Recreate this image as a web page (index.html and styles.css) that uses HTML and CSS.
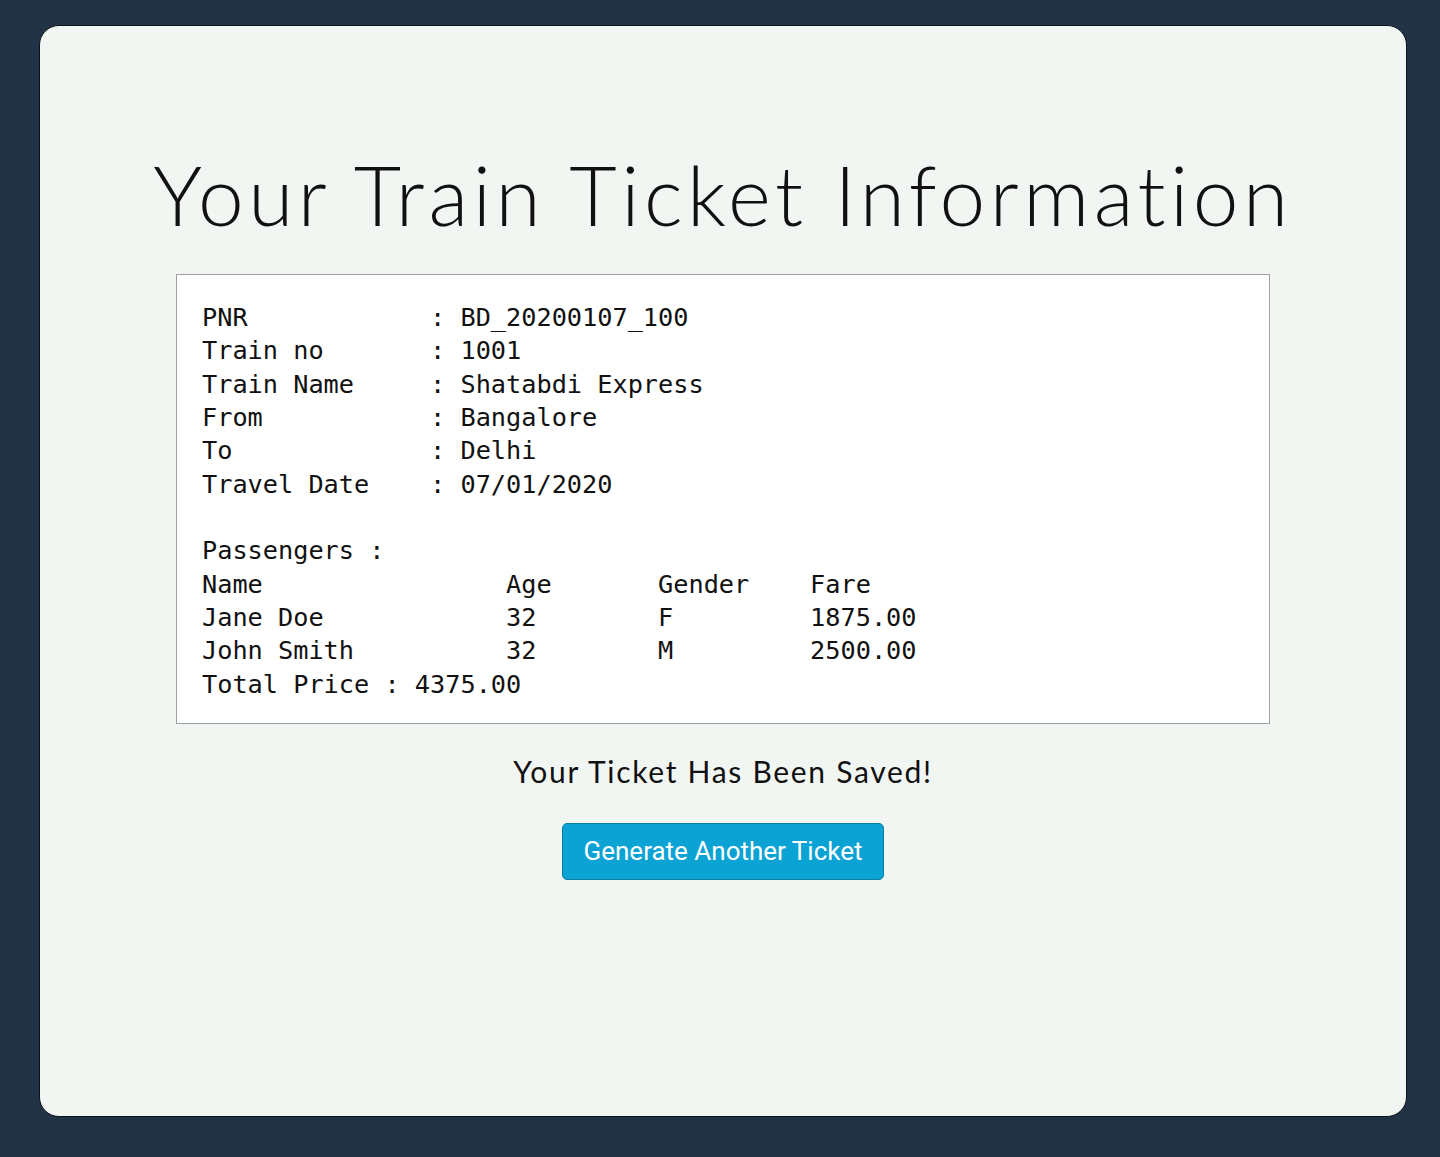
FILE: index.html
```html
<!DOCTYPE html>
<html lang="en">
<head>
<meta charset="utf-8">
<title>Your Train Ticket Information</title>
<link rel="stylesheet" href="styles.css">
</head>
<body>
<main class="card">
  <h1 class="title">Your Train Ticket Information</h1>
  <pre class="ticket">PNR            : BD_20200107_100
Train no       : 1001
Train Name     : Shatabdi Express
From           : Bangalore
To             : Delhi
Travel Date    : 07/01/2020

Passengers :
Name                Age       Gender    Fare
Jane Doe            32        F         1875.00
John Smith          32        M         2500.00
Total Price : 4375.00</pre>
  <p class="saved">Your Ticket Has Been Saved!</p>
  <button class="btn" type="button">Generate Another Ticket</button>
</main>
</body>
</html>
```

FILE: styles.css
```css
html, body {
  margin: 0;
  padding: 0;
}
body {
  background: #233346;
  padding: 25px 33px 40px 39px;
  font-family: Lato, "Noto Sans", sans-serif;
  color: #111;
}
.card {
  box-sizing: border-box;
  height: 1092px;
  background: #f2f6f3;
  border: 1px solid #0d1117;
  border-radius: 20px;
  display: flex;
  flex-direction: column;
  align-items: center;
  padding-top: 118px;
}
.title {
  margin: 0;
  font-family: Lato, "Noto Sans", sans-serif;
  font-weight: 300;
  font-size: 82px;
  line-height: 100px;
  color: #111;
  letter-spacing: 4.5px;
}
.ticket {
  box-sizing: border-box;
  width: 1094px;
  margin: 30px 0 0;
  background: #fff;
  border: 1px solid #a0a0a0;
  padding: 26px 25px 22px;
  font-family: "DejaVu Sans Mono", monospace;
  font-size: 25.25px;
  line-height: 33.33px;
  color: #111;
}
.saved {
  margin: 27px 0 0;
  font-family: Lato, "Noto Sans", sans-serif;
  font-size: 30px;
  line-height: 40px;
  letter-spacing: 1.7px;
  color: #111;
}
.btn {
  margin-top: 32px;
  width: 322px;
  height: 57px;
  background: #0ba2d4;
  border: 1px solid #0a7ea8;
  border-radius: 5px;
  color: #fff;
  font-family: Roboto, "Liberation Sans", sans-serif;
  font-size: 26px;
  padding: 0;
}
```
